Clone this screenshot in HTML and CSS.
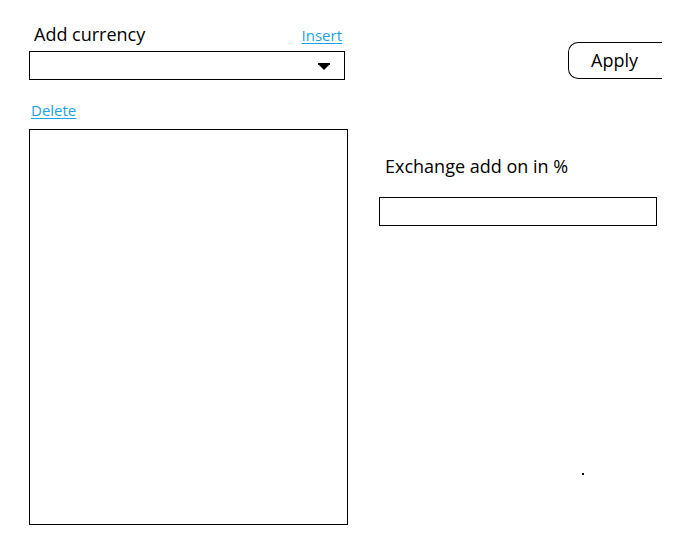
FILE: index.html
```html
<!DOCTYPE html>
<html>
<head>
<meta charset="utf-8">
<link rel="stylesheet" href="styles.css">
</head>
<body>
<div class="page">
  <div class="left">
    <div class="head-row">
      <span class="label">Add currency</span>
      <a class="link" href="#">Insert</a>
    </div>
    <div class="select">
      <svg class="arrow" width="12" height="7" viewBox="0 0 12 7"><rect x="0" y="0" width="12" height="2" fill="#000"/><polygon points="1,2 11,2 6,7" fill="#000"/></svg>
    </div>
    <a class="link delete" href="#">Delete</a>
    <div class="listbox"></div>
  </div>
  <div class="right">
    <div class="apply-row">
      <div class="apply">Apply</div>
    </div>
    <div class="label exch">Exchange add on in %</div>
    <div class="input"></div>
  </div>
  <span class="dot"></span>
</div>
</body>
</html>
```
FILE: styles.css
```css
html, body {
  margin: 0;
  padding: 0;
  background: #fff;
}
body {
  font-family: "Open Sans", "Noto Sans", sans-serif;
  color: #000;
}
.page {
  position: relative;
  width: 695px;
  height: 545px;
  display: flex;
  gap: 31px;
  padding-left: 29px;
  box-sizing: border-box;
}
.left {
  width: 319px;
  display: flex;
  flex-direction: column;
}
.head-row {
  width: 316px;
  display: flex;
  justify-content: space-between;
  align-items: baseline;
  padding-top: 22px;
}
.label {
  font-size: 18px;
  padding-left: 5px;
  line-height: 24px;
}
.link {
  font-size: 15px;
  color: #1aa3e8;
  text-decoration: underline;
  text-underline-offset: 2px;
  line-height: 18px;
  margin-right: 3px;
}
.select {
  margin-top: 5px;
  width: 316px;
  height: 29px;
  border: 1px solid #000;
  box-sizing: border-box;
  display: flex;
  align-items: center;
  justify-content: flex-end;
  padding-right: 14px;
}
.arrow {
  display: block;
  margin-top: 1px;
}
.delete {
  margin-top: 21px;
  padding-left: 2px;
  align-self: flex-start;
}
.listbox {
  margin-top: 10px;
  width: 319px;
  height: 396px;
  border: 1px solid #000;
  box-sizing: border-box;
}
.right {
  width: 278px;
  display: flex;
  flex-direction: column;
}
.apply-row {
  display: flex;
  justify-content: flex-end;
  padding-top: 42px;
  margin-right: -5px;
}
.apply {
  width: 94px;
  height: 37px;
  box-sizing: border-box;
  border: 1px solid #000;
  border-right: none;
  border-radius: 10px 0 0 10px;
  font-size: 18px;
  line-height: 35px;
  padding-left: 22px;
}
.exch {
  margin-top: 75px;
  padding-left: 6px;
}
.input {
  margin-top: 19px;
  width: 278px;
  height: 29px;
  border: 1px solid #000;
  box-sizing: border-box;
}
.dot {
  position: absolute;
  left: 582px;
  top: 473px;
  width: 2px;
  height: 2px;
  background: #000;
}
```
